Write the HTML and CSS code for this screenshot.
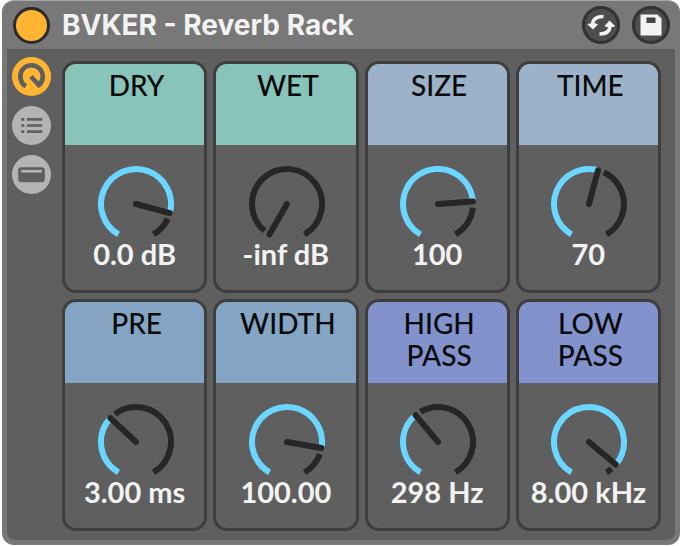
FILE: index.html
```html
<!DOCTYPE html>
<html lang="en">
  <head>
    <meta charset="UTF-8" />
    <meta name="viewport" content="width=device-width, initial-scale=1.0" />
    <title>BVKER - Reverb Rack</title>
    <link rel="stylesheet" href="styles.css">
  </head>
  <body>
    <div class="device">
      <header class="titlebar">
        <button class="power" aria-label="Device on"></button>
        <h1>BVKER - Reverb Rack</h1>
        <button class="round" aria-label="Hot-swap preset">
          <svg viewBox="0 0 38 38">
            <path d="M21.500 10.500C15 10.500 11 13 10.500 18" fill="none" stroke="#f2f2f2" stroke-width="3.600" />
            <path d="M5.500 18.500L7 17.500h7.500l1.500 1L11 23.500z" fill="#f2f2f2" />
            <path d="M17.500 28C23.500 28 27.500 25.500 28 20.500" fill="none" stroke="#f2f2f2" stroke-width="3.600" />
            <path d="M22.500 20L24 21h7.500l1.500-1L27.500 14.500z" fill="#f2f2f2" />
          </svg>
        </button>
        <button class="round" aria-label="Save preset">
          <svg viewBox="0 0 38 38">
            <path d="M8.500 8.500h17l4 4v17H8.500z" fill="#f2f2f2" />
            <path d="M14.500 11.500h9v5.500H14.500z" fill="#444" />
          </svg>
        </button>
      </header>

      <main class="rack">
        <nav class="rail">
          <button class="view active" aria-label="Macro controls">
            <svg viewBox="0 0 38 38">
              <path d="M13.500 28.500A11 11 0 1 1 26 27.500" fill="none" stroke="#5f5f5f" stroke-width="4.500" />
              <path d="M18.500 19L27.500 29" fill="none" stroke="#5f5f5f" stroke-width="4.500" />
            </svg>
          </button>
          <button class="view" aria-label="Chain list">
            <svg viewBox="0 0 38 38">
              <path d="M9 13h3m2.500 0H29.500M9 19h3m2.500 0H29.500M9 25h3m2.500 0H29.500" fill="none" stroke="#5f5f5f" stroke-width="2.600" />
            </svg>
          </button>
          <button class="view" aria-label="Devices">
            <svg viewBox="0 0 38 38">
              <rect x="6" y="12" width="26" height="14.500" rx="3" fill="#5f5f5f" />
              <path d="M9 15.800H29" stroke="#b4b4b4" stroke-width="2.600" />
            </svg>
          </button>
        </nav>

        <div class="macros">
          <section class="macro teal">
            <label class="name" for="dry">DRY</label>
            <div class="knob"><input type="range" id="dry" min="-150" max="150" value="105" /></div>
            <output for="dry">0.0 dB</output>
          </section>
          <section class="macro teal">
            <label class="name" for="wet">WET</label>
            <div class="knob"><input type="range" id="wet" min="-150" max="150" value="-150" /></div>
            <output for="wet">-inf dB</output>
          </section>
          <section class="macro steel">
            <label class="name" for="size">SIZE</label>
            <div class="knob"><input type="range" id="size" min="-150" max="150" value="86" /></div>
            <output for="size">100</output>
          </section>
          <section class="macro steel">
            <label class="name" for="time">TIME</label>
            <div class="knob"><input type="range" id="time" min="-150" max="150" value="15" /></div>
            <output for="time">70</output>
          </section>
          <section class="macro blue">
            <label class="name" for="pre">PRE</label>
            <div class="knob"><input type="range" id="pre" min="-150" max="150" value="-47" /></div>
            <output for="pre">3.00 ms</output>
          </section>
          <section class="macro blue">
            <label class="name" for="width">WIDTH</label>
            <div class="knob"><input type="range" id="width" min="-150" max="150" value="100" /></div>
            <output for="width">100.00</output>
          </section>
          <section class="macro violet">
            <label class="name" for="high">HIGH<br />PASS</label>
            <div class="knob"><input type="range" id="high" min="-150" max="150" value="-40" /></div>
            <output for="high">298 Hz</output>
          </section>
          <section class="macro violet">
            <label class="name" for="low">LOW<br />PASS</label>
            <div class="knob"><input type="range" id="low" min="-150" max="150" value="130" /></div>
            <output for="low">8.00 kHz</output>
          </section>
        </div>
      </main>
    </div>

    <script src="script.js"></script>
  </body>
</html>
```

FILE: styles.css
```css
* {
  box-sizing: border-box;
}
body {
  margin: 0;
  padding: 0 1px 1px 2px;
  background-color: #fff;
  font-family: Lato, "Liberation Sans", sans-serif;
  font-size: 28px;
  line-height: 32px;
  color: #f2f2f2;
}
button {
  display: block;
  flex: none;
  padding: 0;
  border: none;
  border-radius: 50%;
  cursor: pointer;
}
svg {
  display: block;
  width: 100%;
  height: 100%;
}
.device {
  padding: 0 5px 5px;
  background-color: #787878;
  border-top: 1px solid #a8a8a8;
  border-radius: 12px;
}
.titlebar {
  display: flex;
  align-items: center;
  gap: 12px;
  height: 48px;
  padding: 0 5px 0 6px;
}
.titlebar h1 {
  flex: 1;
  margin: 0;
  font-family: Inter, "Liberation Sans", sans-serif;
  font-size: 28px;
  font-weight: bold;
}
.power {
  width: 37px;
  height: 37px;
  background-color: #ffb532;
  border: 3px solid #2b2b2b;
}
.round {
  width: 38px;
  height: 38px;
  background-color: #4e4e4e;
  box-shadow: inset 0 0 0 3px #333;
}
.rack {
  display: flex;
  gap: 11px;
  padding: 8px 14px 9px 5px;
  background-color: #5f5f5f;
  border-radius: 0 0 8px 8px;
}
.rail {
  display: flex;
  flex-direction: column;
  gap: 10px;
}
.view {
  width: 39px;
  height: 39px;
  background-color: #b4b4b4;
}
.view.active {
  background-color: #ffb532;
}
.macros {
  flex: 1;
  display: grid;
  grid-template-columns: repeat(4, 1fr);
  gap: 6px;
  padding-top: 4px;
}
.macro {
  display: flex;
  flex-direction: column;
  align-items: center;
  padding-bottom: 20px;
  border: 3px solid #3e3e3e;
  border-radius: 14px;
  overflow: hidden;
}
.name {
  width: 100%;
  height: 81px;
  padding: 5px 0 0 4px;
  color: #0a0a0a;
  font-weight: 500;
  text-align: center;
}
.teal .name {
  background-color: #88c4ba;
}
.steel .name {
  background-color: #9bb2c8;
}
.blue .name {
  background-color: #85a5c5;
}
.violet .name {
  background-color: #8292cc;
}
.knob {
  position: relative;
  width: 80px;
  height: 76px;
  margin: 19px 0 0 2px;
}
.knob input {
  position: absolute;
  inset: 0;
  width: 100%;
  height: 100%;
  margin: 0;
  opacity: 0;
  cursor: pointer;
}
.track,
.fill,
.needle {
  fill: none;
  stroke: #262626;
  stroke-width: 6;
}
.fill {
  stroke: #6bd6ff;
}
.needle {
  stroke-linecap: round;
}
.macro output {
  margin-top: -2px;
  font-size: 29px;
  font-weight: bold;
  white-space: nowrap;
}
```

FILE: script.js
```javascript
const CX = 40;
const CY = 40;
const R = 35;

// angles are in degrees, clockwise from 12 o'clock
function point(angle, r) {
  const a = (angle * Math.PI) / 180;
  return `${CX + r * Math.sin(a)} ${CY - r * Math.cos(a)}`;
}

function arc(from, to) {
  if (to <= from) return "";
  const large = to - from > 180 ? 1 : 0;
  return `M${point(from, R)}A${R} ${R} 0 ${large} 1 ${point(to, R)}`;
}

document.querySelectorAll(".knob").forEach((knob) => {
  const input = knob.querySelector("input");
  knob.insertAdjacentHTML(
    "afterbegin",
    `<svg viewBox="0 0 80 76">
      <path class="track" />
      <path class="fill" />
      <path class="needle" />
    </svg>`
  );

  function draw() {
    const angle = Number(input.value);
    knob.querySelector(".track").setAttribute("d", arc(angle + 10, 150));
    knob.querySelector(".fill").setAttribute("d", arc(-150, angle));
    knob.querySelector(".needle").setAttribute("d", `M${CX} ${CY}L${point(angle, 35)}`);
  }

  input.addEventListener("input", draw);
  draw();
});
```
